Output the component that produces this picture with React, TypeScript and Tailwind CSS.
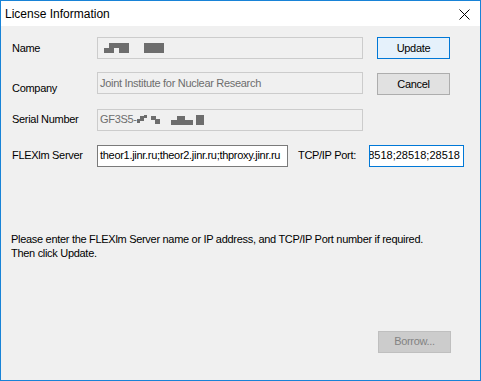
import React from "react";

const font = { fontFamily: '"Liberation Sans", Arial, sans-serif' };

function Field({
  width,
  children,
  disabled,
  focused,
}: {
  width: string;
  children?: React.ReactNode;
  disabled?: boolean;
  focused?: boolean;
}) {
  const look = disabled
    ? "border-[#cccccc] bg-[#f0f0f0] text-[#6d6d6d]"
    : focused
    ? "border-[#0078d7] bg-white text-black justify-end"
    : "border-[#7a7a7a] bg-white text-black";
  return (
    <div className={`${width} h-[22px] shrink-0 border ${look} flex items-center px-[2px] overflow-hidden whitespace-nowrap`}>
      {children}
    </div>
  );
}

function Button({ label, kind }: { label: string; kind: "default" | "normal" | "disabled" }) {
  const look =
    kind === "default"
      ? "border-[#0078d7] bg-[#e5f1fb] text-black"
      : kind === "normal"
      ? "border-[#adadad] bg-[#e1e1e1] text-black"
      : "border-[#bfbfbf] bg-[#cccccc] text-[#838383]";
  return (
    <div className={`w-[73px] h-[22px] border ${look} flex items-center justify-center`}>
      {label}
    </div>
  );
}

export default function App() {
  return (
    <div
      className="w-[481px] h-[381px] border border-[#1883d7] flex flex-col bg-[#f0f0f0] text-[11px] tracking-[-0.3px] text-black"
      style={font}
    >
      <div className="h-[25px] bg-white flex items-center justify-between pl-[4px] pr-[10px] shrink-0 tracking-normal">
        <span className="text-[12px]">License Information</span>
        <svg width="11" height="11" viewBox="0 0 11 11" className="mt-[1px]">
          <path d="M0.5 0.5 L10.5 10.5 M10.5 0.5 L0.5 10.5" stroke="#000" strokeWidth="1" />
        </svg>
      </div>

      <div className="flex-1 flex flex-col pl-[11px] pt-[11px] pr-[16px]">
        <div className="flex items-center">
          <div className="w-[85px]">Name</div>
          <Field width="w-[266px]" disabled>
            <svg width="70" height="12" viewBox="0 0 70 12" className="ml-[4px]">
              <g fill="#6d6d6d">
                <rect x="0" y="6" width="5" height="5" />
                <rect x="5" y="1" width="20" height="5" />
                <rect x="5" y="6" width="5" height="5" />
                <rect x="15" y="6" width="10" height="5" />
                <rect x="40" y="1" width="20" height="10" />
              </g>
            </svg>
          </Field>
          <div className="ml-[14px]">
            <Button label="Update" kind="default" />
          </div>
        </div>

        <div className="flex items-start mt-[13px]">
          <div className="w-[85px] pt-[8px]">Company</div>
          <Field width="w-[266px]" disabled>
            Joint Institute for Nuclear Research
          </Field>
          <div className="ml-[14px] mt-[1px]">
            <Button label="Cancel" kind="normal" />
          </div>
        </div>

        <div className="flex items-center mt-[12px]">
          <div className="w-[85px]">Serial Number</div>
          <Field width="w-[266px]" disabled>
            <span>GF3S5-</span>
            <svg width="70" height="12" viewBox="0 0 70 12">
              <g fill="#6d6d6d">
                <rect x="0" y="5" width="3" height="4" />
                <rect x="3" y="2" width="4" height="5" />
                <rect x="7" y="1" width="3" height="3" />
                <rect x="14" y="2" width="5" height="4" />
                <rect x="18" y="5" width="5" height="5" />
                <rect x="34" y="6" width="22" height="5" />
                <rect x="40" y="2" width="8" height="4" />
                <rect x="59" y="1" width="8" height="10" />
              </g>
            </svg>
          </Field>
        </div>

        <div className="flex items-center mt-[14px]">
          <div className="w-[85px]">FLEXlm Server</div>
          <Field width="w-[191px]">theor1.jinr.ru;theor2.jinr.ru;thproxy.jinr.ru</Field>
          <div className="w-[81px] pl-[10px] whitespace-nowrap">TCP/IP Port:</div>
          <Field width="w-[95px]" focused>
            <span className="shrink-0 tracking-normal pr-[1px]">28518;28518;28518</span>
          </Field>
        </div>

        <div className="mt-[65px] leading-[14px] -ml-[1px] whitespace-nowrap">
          <div>Please enter the FLEXlm Server name or IP address, and TCP/IP Port number if required.</div>
          <div>Then click Update.</div>
        </div>

        <div className="flex justify-end mt-[71px] pr-[13px]">
          <Button label="Borrow..." kind="disabled" />
        </div>
      </div>
    </div>
  );
}
